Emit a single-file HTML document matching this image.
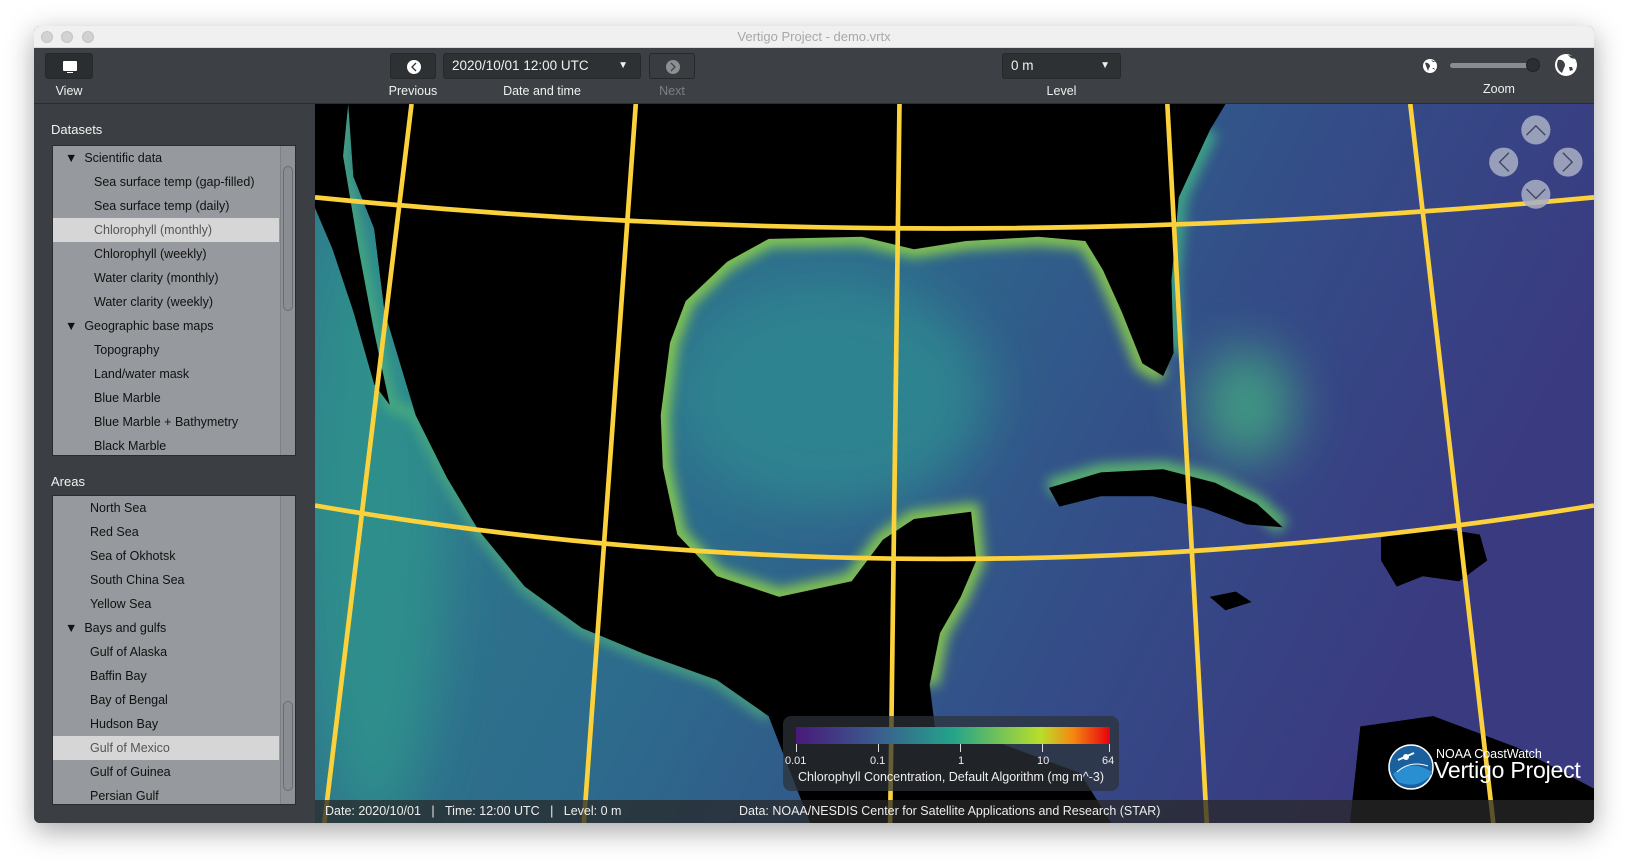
<!DOCTYPE html>
<html><head><meta charset="utf-8">
<style>
*{margin:0;padding:0;box-sizing:border-box}
body{width:1628px;height:866px;background:#fff;position:relative;overflow:hidden;font-family:"Liberation Sans",sans-serif}
.win{position:absolute;left:34px;top:26px;width:1560px;height:797px;border-radius:6px;overflow:hidden;box-shadow:0 8px 28px rgba(0,0,0,.35);background:#3a3d41}
.title{position:absolute;left:0;top:0;width:100%;height:22px;background:#f0f0f0;border-bottom:1px solid #d8d8d8;text-align:center;font-size:13px;line-height:22px;color:#a8a8a8}
.dot{position:absolute;top:5px;width:12px;height:12px;border-radius:50%;background:#d2d2d2;border:1px solid #c4c4c4}
.tool{position:absolute;left:0;top:22px;width:100%;height:56px;background:#3d4044;border-bottom:1px solid #2a2c2f}
.btn{position:absolute;top:5px;height:26px;background:#2e3134;border:1px solid #26282a;border-radius:3px}
.lbl{position:absolute;top:36px;font-size:12.5px;color:#f0f0f0;text-align:center}
.side{position:absolute;left:0;top:78px;width:280px;height:719px;background:#3b3e42}
.h{position:absolute;left:17px;font-size:13px;color:#f2f2f2}
.list{position:absolute;left:18px;width:244px;background:#96999d;border:1px solid #2a2c2f;overflow:hidden}
.row{height:24px;line-height:24px;font-size:12.5px;color:#111;white-space:nowrap;position:relative}
.row.sel{background:#d6d6d6;color:#555;margin-right:16px}
.sb{position:absolute;right:0;top:0;width:15px;height:100%;background:#8e9195;border-left:1px solid #7d8084}
.sb i{position:absolute;left:2px;width:10px;border:1px solid #6a6d70;border-radius:5px;background:#8a8d91}
.map{position:absolute;left:281px;top:78px;width:1279px;height:719px;background:#000;overflow:hidden}
.status{position:absolute;left:0;bottom:0;width:100%;height:23px;background:rgba(40,40,40,.75);font-size:12.5px;color:#eee;line-height:23px}
</style></head><body>
<div class="win">
 <div class="title">Vertigo Project - demo.vrtx
  <div class="dot" style="left:7px"></div><div class="dot" style="left:27px"></div><div class="dot" style="left:48px"></div></div>
 <div class="tool">
  <div class="btn" style="left:11px;width:48px;background:#2b2e31"><div style="position:absolute;left:17px;top:7px;width:14px;height:10px;background:#fff;border-radius:1px"></div><div style="position:absolute;left:21px;top:18px;width:6px;height:1px;background:#fff"></div></div>
  <div class="lbl" style="left:11px;width:48px">View</div>
  <div class="btn" style="left:356px;width:46px"><svg width="46" height="26"><circle cx="23" cy="13" r="7" fill="#fff"/><path d="M25 9l-4 4 4 4" stroke="#333" stroke-width="1.3" fill="none"/></svg></div>
  <div class="lbl" style="left:346px;width:66px">Previous</div>
  <div class="btn" style="left:409px;width:198px;color:#f0f0f0;font-size:13.5px;line-height:24px;padding-left:8px">2020/10/01 12:00 UTC<span style="position:absolute;right:12px;top:0;font-size:10px">▼</span></div>
  <div class="lbl" style="left:409px;width:198px">Date and time</div>
  <div class="btn" style="left:615px;width:46px;background:#393c40"><svg width="46" height="26"><circle cx="23" cy="13" r="7" fill="#8d8f92"/><path d="M21 9l4 4-4 4" stroke="#444" stroke-width="1.3" fill="none"/></svg></div>
  <div class="lbl" style="left:615px;width:46px;color:#7d8084">Next</div>
  <div class="btn" style="left:968px;width:119px;color:#f0f0f0;font-size:13.5px;line-height:24px;padding-left:8px">0 m<span style="position:absolute;right:10px;top:0;font-size:10px">▼</span></div>
  <div class="lbl" style="left:968px;width:119px">Level</div>
  <svg style="position:absolute;left:1386px;top:8px" width="20" height="20"><circle cx="10" cy="10" r="7" fill="#fff"/><path d="M5 7q2-1 4 1t0 4l-1 3M11 4l2 2 3 0M12 12l2 0 1 2" fill="#3d4044"/></svg>
  <div style="position:absolute;left:1416px;top:15px;width:80px;height:5px;border-radius:3px;background:#8a8d90"></div>
  <div style="position:absolute;left:1492px;top:10px;width:14px;height:14px;border-radius:50%;background:#2c2f32;border:1px solid #222"></div>
  <svg style="position:absolute;left:1519px;top:4px" width="26" height="26"><circle cx="13" cy="13" r="11" fill="#fff"/><path d="M5 8q4-1 6 2t0 6l-2 5Q4 18 4 12zM15 3l3 3 4 1 -2 -3zM16 15l3 0 1 3 -3 1z" fill="#3d4044"/></svg>
  <div class="lbl" style="left:1440px;width:50px;top:34px">Zoom</div>
 </div>
 <div class="side">
  <div class="h" style="top:18px">Datasets</div>
  <div class="list" style="top:41px;height:311px">
   <div class="row" style="padding-left:12px">▼&nbsp; Scientific data</div>
   <div class="row" style="padding-left:41px">Sea surface temp (gap-filled)</div>
   <div class="row" style="padding-left:41px">Sea surface temp (daily)</div>
   <div class="row sel" style="padding-left:41px">Chlorophyll (monthly)</div>
   <div class="row" style="padding-left:41px">Chlorophyll (weekly)</div>
   <div class="row" style="padding-left:41px">Water clarity (monthly)</div>
   <div class="row" style="padding-left:41px">Water clarity (weekly)</div>
   <div class="row" style="padding-left:12px">▼&nbsp; Geographic base maps</div>
   <div class="row" style="padding-left:41px">Topography</div>
   <div class="row" style="padding-left:41px">Land/water mask</div>
   <div class="row" style="padding-left:41px">Blue Marble</div>
   <div class="row" style="padding-left:41px">Blue Marble + Bathymetry</div>
   <div class="row" style="padding-left:41px">Black Marble</div>
   <div class="sb"><i style="top:20px;height:145px"></i></div>
  </div>
  <div class="h" style="top:370px">Areas</div>
  <div class="list" style="top:391px;height:310px">
   <div class="row" style="padding-left:37px">North Sea</div>
   <div class="row" style="padding-left:37px">Red Sea</div>
   <div class="row" style="padding-left:37px">Sea of Okhotsk</div>
   <div class="row" style="padding-left:37px">South China Sea</div>
   <div class="row" style="padding-left:37px">Yellow Sea</div>
   <div class="row" style="padding-left:12px">▼&nbsp; Bays and gulfs</div>
   <div class="row" style="padding-left:37px">Gulf of Alaska</div>
   <div class="row" style="padding-left:37px">Baffin Bay</div>
   <div class="row" style="padding-left:37px">Bay of Bengal</div>
   <div class="row" style="padding-left:37px">Hudson Bay</div>
   <div class="row sel" style="padding-left:37px">Gulf of Mexico</div>
   <div class="row" style="padding-left:37px">Gulf of Guinea</div>
   <div class="row" style="padding-left:37px">Persian Gulf</div>
   <div class="sb"><i style="top:205px;height:90px"></i></div>
  </div>
 </div>
 <div class="map">
  <svg width="1279" height="719" viewBox="303 100 1232 693" preserveAspectRatio="none">
   <defs>
    <linearGradient id="oc" x1="0" y1="0" x2="1" y2="0.3">
     <stop offset="0" stop-color="#2f7f8c"/><stop offset="0.45" stop-color="#2d6b8c"/><stop offset="0.75" stop-color="#344c88"/><stop offset="1" stop-color="#3a3a80"/></linearGradient>
    <filter id="bl" x="-20%" y="-20%" width="140%" height="140%"><feGaussianBlur stdDeviation="6"/></filter>
    <filter id="bl2" x="-100%" y="-100%" width="300%" height="300%"><feGaussianBlur stdDeviation="25"/></filter>
   </defs>
   <rect x="303" y="100" width="1232" height="693" fill="url(#oc)"/>
   <ellipse cx="360" cy="500" rx="70" ry="300" fill="#2d8e8c" filter="url(#bl2)"/>
   <ellipse cx="800" cy="380" rx="150" ry="110" fill="#2f8390" filter="url(#bl2)"/>
   <ellipse cx="1200" cy="390" rx="45" ry="55" fill="#3f9a82" filter="url(#bl2)"/>
   <g id="land">
    <path d="M335 100 L1180 100 L1165 125 L1135 190 L1128 270 L1130 340 L1120 362 L1100 350 L1080 300 L1062 260 L1045 232 L1000 228 L930 232 L880 240 L830 228 L740 230 L700 252 L660 290 L645 330 L636 400 L638 450 L652 515 L690 555 L750 575 L820 560 L850 520 L880 500 L935 493 L940 540 L925 575 L905 610 L895 660 L900 700 L960 715 L1000 730 L1040 745 L1070 793 L780 793 L740 690 L690 655 L620 630 L560 605 L505 565 L460 510 L430 460 L400 400 L385 350 L370 300 L360 220 L340 170 Z" fill="#000"/>
    <path d="M303 100 L335 100 L330 150 L345 240 L360 320 L375 390 L360 370 L340 300 L320 240 L303 200 Z" fill="#000"/>
    <path d="M1010 470 L1060 455 L1120 452 L1170 465 L1210 485 L1235 508 L1200 505 L1160 490 L1110 478 L1060 478 L1020 488 Z" fill="#000"/>
    <path d="M1330 518 L1380 508 L1425 515 L1432 540 L1405 560 L1370 555 L1345 565 L1330 540 Z" fill="#000"/>
    <path d="M1165 575 L1190 570 L1205 580 L1180 588 Z" fill="#000"/>
    <path d="M1310 700 L1380 690 L1460 720 L1535 760 L1535 793 L1300 793 Z" fill="#000"/>
   </g>
   <g fill="none" stroke="#8fd24a" stroke-width="16" filter="url(#bl)" opacity="0.9">
    <path d="M1120 362 L1100 350 L1080 300 L1062 260 L1045 232 L1000 228 L930 232 L880 240 L830 228 L740 230 L700 252 L660 290 L645 330 L636 400 L638 450 L652 515 L690 555 L750 575 L820 560 L850 520 L880 500 L935 493 L940 540 L925 575 L905 610 L895 660"/>
    <path d="M1165 125 L1135 190 L1128 270 L1130 340" stroke="#3fae86"/>
    <path d="M1010 470 L1060 455 L1120 452 L1170 465 L1210 485 L1235 508" stroke="#5fbf6a"/>
    <path d="M335 100 L330 150 L345 240 L360 320 L375 390 L400 400 L430 460 L460 510 L505 565 L560 605 L620 630 L690 655 L740 690" stroke="#4fb27a" stroke-width="10"/>
   </g>
   <use href="#land"/>
   <g fill="none" stroke="#fbd13c" stroke-width="4.5">
    <path d="M303 190 Q900 250 1535 190"/>
    <path d="M303 487 Q900 590 1535 487"/>
    <path d="M396 100 L312 793"/>
    <path d="M612 100 L562 793"/>
    <path d="M866 100 L857 793"/>
    <path d="M1124 100 L1162 793"/>
    <path d="M1358 100 L1438 793"/>
   </g>
   <g fill="#aab0c4" opacity="0.85">
    <circle cx="1479" cy="125" r="14"/><circle cx="1448" cy="156" r="14"/><circle cx="1510" cy="156" r="14"/><circle cx="1479" cy="187" r="14"/>
   </g>
   <g fill="none" stroke="#3c4560" stroke-width="1.3">
    <path d="M1470 130l9-9 9 9M1453 147l-9 9 9 9M1505 147l9 9-9 9M1470 182l9 9 9-9"/>
   </g>
  </svg>
  <div style="position:absolute;left:468px;top:612px;width:336px;height:75px;border-radius:8px;background:rgba(45,50,55,.72)"></div>
  <svg style="position:absolute;left:481px;top:623px" width="314" height="17"><defs><linearGradient id="cb2" x1="0" y1="0" x2="1" y2="0"><stop offset="0" stop-color="#49197a"/><stop offset="0.25" stop-color="#3b5a8e"/><stop offset="0.5" stop-color="#23a48a"/><stop offset="0.78" stop-color="#b9de2b"/><stop offset="0.88" stop-color="#f48a12"/><stop offset="1" stop-color="#e8000f"/></linearGradient></defs><rect width="314" height="17" fill="url(#cb2)"/></svg>
  <div style="position:absolute;left:481px;top:640px;width:320px;height:10px">
   <div style="position:absolute;left:0;width:1px;height:8px;background:#ddd"></div><div style="position:absolute;left:82px;width:1px;height:8px;background:#ddd"></div><div style="position:absolute;left:164px;width:1px;height:8px;background:#ddd"></div><div style="position:absolute;left:246px;width:1px;height:8px;background:#ddd"></div><div style="position:absolute;left:313px;width:1px;height:8px;background:#ddd"></div>
  </div>
  <div style="position:absolute;left:470px;top:651px;font-size:11px;color:#eee;width:330px;height:14px">
   <span style="position:absolute;left:0">0.01</span><span style="position:absolute;left:85px">0.1</span><span style="position:absolute;left:173px">1</span><span style="position:absolute;left:252px">10</span><span style="position:absolute;left:317px">64</span></div>
  <div style="position:absolute;left:468px;top:666px;width:336px;text-align:center;font-size:12.5px;color:#eee;white-space:nowrap">Chlorophyll Concentration, Default Algorithm (mg m^-3)</div>
  <svg style="position:absolute;left:1073px;top:640px" width="46" height="46"><circle cx="23" cy="23" r="22" fill="#1a5f9e" stroke="#fff" stroke-width="1.5"/><path d="M5 30 Q23 14 44 28 L44 30 Q30 46 10 38Z" fill="#2a8fd0"/><path d="M9 28 Q22 16 40 22" stroke="#fff" stroke-width="1" fill="none"/><path d="M10 16 L26 9" stroke="#fff" stroke-width="2"/><circle cx="18" cy="13" r="3" fill="#fff"/></svg>
  <div style="position:absolute;left:1121px;top:643px;font-size:12.5px;color:#fff;white-space:nowrap">NOAA CoastWatch</div>
  <div style="position:absolute;left:1119px;top:653px;font-size:23px;color:#fff;white-space:nowrap;letter-spacing:-0.2px">Vertigo Project</div>
  <div class="status"><span style="position:absolute;left:10px">Date: 2020/10/01 &nbsp;&nbsp;| &nbsp;&nbsp;Time: 12:00 UTC &nbsp;&nbsp;| &nbsp;&nbsp;Level: 0 m</span><span style="position:absolute;left:424px">Data: NOAA/NESDIS Center for Satellite Applications and Research (STAR)</span></div>
 </div>
</div>
</body></html>
